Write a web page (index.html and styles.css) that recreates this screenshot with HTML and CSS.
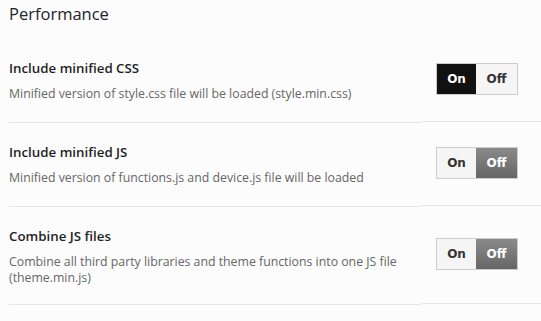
FILE: index.html
```html
<!DOCTYPE html>
<html lang="en">

<head>
  <meta charset="utf-8" />
  <title>Performance</title>
  <meta name="viewport" content="width=device-width, initial-scale=1">
  <link rel="stylesheet" href="styles.css">
</head>

<body>
  <section class="settings">
    <h2 class="settings-title">Performance</h2>

    <!-- ===== CSS ===== -->
    <div class="option">
      <div class="option-text">
        <h3>Include minified CSS</h3>
        <p>Minified version of style.css file will be loaded (style.min.css)</p>
      </div>
      <div class="option-control">
        <div class="switch">
          <span class="switch-on active">On</span>
          <span class="switch-off">Off</span>
        </div>
      </div>
    </div>

    <!-- ===== JS ===== -->
    <div class="option">
      <div class="option-text">
        <h3>Include minified JS</h3>
        <p>Minified version of functions.js and device.js file will be loaded</p>
      </div>
      <div class="option-control">
        <div class="switch">
          <span class="switch-on">On</span>
          <span class="switch-off active">Off</span>
        </div>
      </div>
    </div>

    <!-- ===== COMBINE ===== -->
    <div class="option">
      <div class="option-text">
        <h3>Combine JS files</h3>
        <p>Combine all third party libraries and theme functions into one JS file (theme.min.js)</p>
      </div>
      <div class="option-control">
        <div class="switch">
          <span class="switch-on">On</span>
          <span class="switch-off active">Off</span>
        </div>
      </div>
    </div>
  </section>
</body>

</html>
```

FILE: styles.css
```css
/* ===== BASE ===== */
* {
  box-sizing: border-box;
  margin: 0;
  padding: 0
}

body {
  font-family: "Open Sans", "Noto Sans", sans-serif;
  background: #fcfcfc;
  color: #333;
  padding: 2px 0 0 9px
}

.settings-title {
  font-size: 16.5px;
  font-weight: 400;
  line-height: 24px;
  color: #1d2327;
  margin-bottom: 13px
}

/* ===== OPTION ROWS ===== */
.option {
  display: flex
}

.option-text {
  width: 412px;
  padding: 20px 0;
  border-bottom: 1px solid #e5e5e5
}

.option:last-child .option-text {
  padding-bottom: 18px
}

.option-text h3 {
  font-size: 13.3px;
  font-weight: 600;
  line-height: 18px;
  color: #1f1f1f;
  margin-bottom: 9px
}

.option-text p {
  font-size: 12.3px;
  line-height: 16px;
  color: #666
}

.option-control {
  flex: 1;
  display: flex;
  align-items: center;
  padding: 0 0 3px 15px;
  border-bottom: 1px solid #e5e5e5;
  margin-bottom: 1px
}

/* ===== SWITCH ===== */
.switch {
  display: flex;
  border: 1px solid #ccc;
  height: 32px
}

.switch span {
  display: flex;
  align-items: center;
  justify-content: center;
  font-family: "DejaVu Sans", Verdana, sans-serif;
  font-weight: 700;
  font-size: 12px;
  color: #333;
  background: #f5f5f5
}

.switch-on {
  width: 39px
}

.switch-off {
  width: 41px
}

.switch-on.active {
  background: #111;
  color: #fff
}

.switch-off.active {
  background: linear-gradient(#8a8a8a, #666);
  color: #fff
}
```
